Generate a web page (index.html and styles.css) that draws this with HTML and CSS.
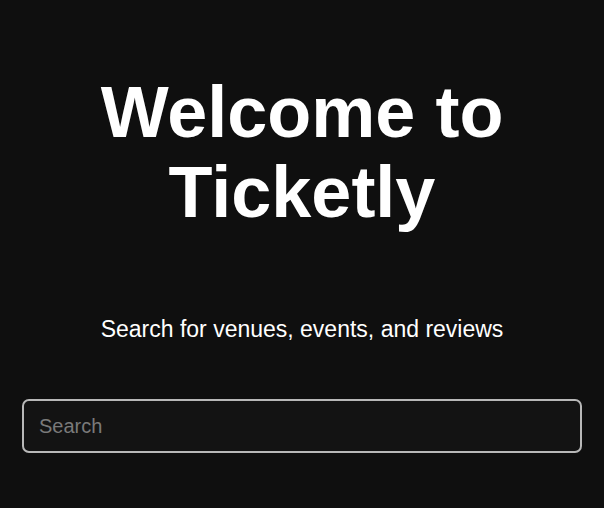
FILE: index.html
```html
<!DOCTYPE html>
<html lang="en">

<head>
    <meta charset="UTF-8">
    <meta name="viewport" content="width=device-width, initial-scale=1.0">
    <title>Ticketly</title>
    <link rel="stylesheet" href="styles.css">
</head>

<body>
    <div class="hero">
        <h1>Welcome to<br>Ticketly</h1>
        <p class="subtitle">Search for venues, events, and reviews</p>
        <div class="search-bar">
            <input type="text" placeholder="Search">
        </div>
    </div>
</body>

</html>
```

FILE: styles.css
```css
body {
    font-family: "Liberation Sans", Arial, sans-serif;
    background-color: #0f0f0f;
    color: white;
    margin: 0;
}

.hero {
    padding: 72px 22px 0;
    text-align: center;
}

.hero h1 {
    font-size: 72px;
    line-height: 80px;
    font-weight: bold;
    margin: 0;
}

.subtitle {
    font-size: 23px;
    line-height: 34px;
    margin: 80px 0 0;
}

.search-bar {
    margin-top: 53px;
}

.search-bar input {
    box-sizing: border-box;
    width: 100%;
    height: 54px;
    padding: 0 15px;
    font-family: inherit;
    font-size: 20px;
    color: white;
    background-color: #131313;
    border: 2px solid #b8b8b8;
    border-radius: 7px;
    outline: none;
}

.search-bar input::placeholder {
    color: #7a7a7a;
}
```
